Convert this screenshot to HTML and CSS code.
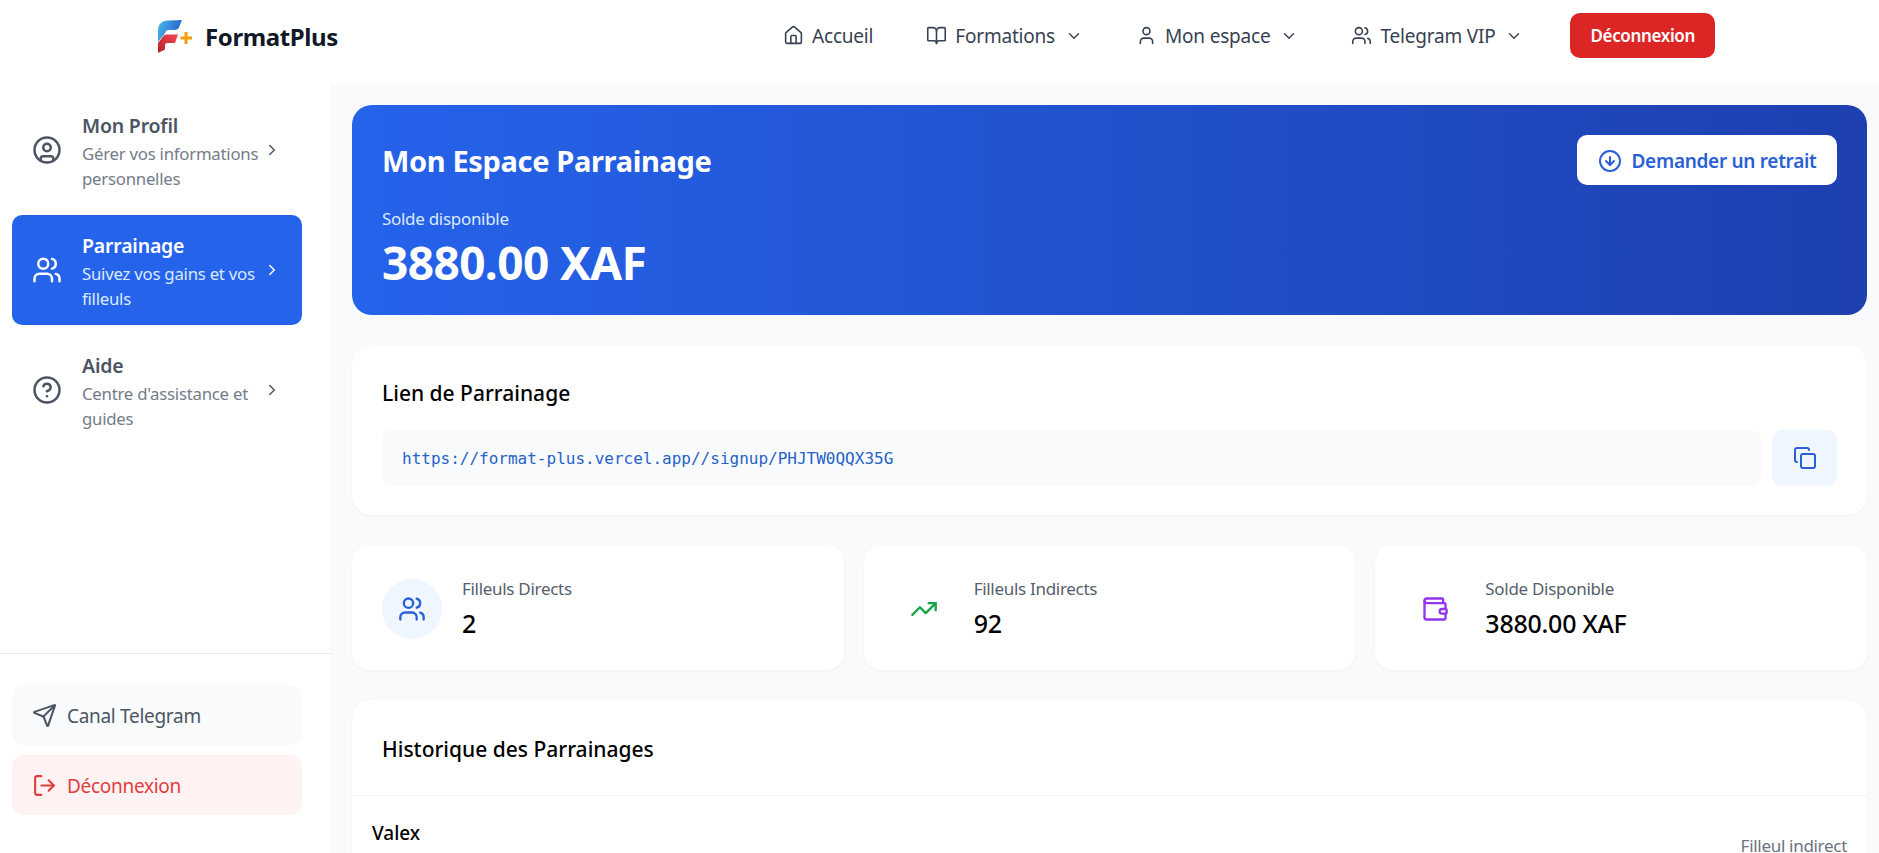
FILE: index.html
```html
<!DOCTYPE html>
<html lang="fr">
<head>
<meta charset="utf-8">
<title>FormatPlus</title>
<link rel="stylesheet" href="styles.css">
</head>
<body>
<svg class="defs" width="0" height="0" aria-hidden="true">
  <defs>
    <linearGradient id="lgTop" x1="0" y1="0.2" x2="1" y2="0.5"><stop offset="0" stop-color="#45b4ea"/><stop offset="1" stop-color="#2560c4"/></linearGradient>
    <linearGradient id="lgBot" x1="0" y1="1" x2="1" y2="0.2"><stop offset="0" stop-color="#b91f2d"/><stop offset="1" stop-color="#f0454d"/></linearGradient>
    <symbol id="i-chev-r" viewBox="0 0 24 24"><path d="m9 18 6-6-6-6"/></symbol>
    <symbol id="i-chev-d" viewBox="0 0 24 24"><path d="m6 9 6 6 6-6"/></symbol>
    <symbol id="i-users" viewBox="0 0 24 24"><path d="M16 21v-2a4 4 0 0 0-4-4H6a4 4 0 0 0-4 4v2"/><path d="M16 3.130a4 4 0 0 1 0 7.750"/><path d="M22 21v-2a4 4 0 0 0-3-3.870"/><circle cx="9" cy="7" r="4"/></symbol>
  </defs>
</svg>
<header class="topbar">
  <div class="brand">
    <svg class="logo" viewBox="158 18 35 35">
      <path d="M158 30C158 23 162 19.500 168 19.500L182 19 178.500 27.500C177 28.500 175 29 173 29H169C166.500 29 165.500 30.500 164.500 33L158 41Z" fill="url(#lgTop)"/>
      <path d="M158 42 163.500 35C164.500 33.800 165.500 33.500 167 33.500H178L175 42H167.500C166 42 165 43 165 44.500V48.500L158 52Z" fill="url(#lgBot)"/>
      <path d="M186 31V43M180.500 37H192" stroke="#f59e0b" stroke-width="3" fill="none"/>
    </svg>
    <span class="brand-name">FormatPlus</span>
  </div>
  <nav class="topnav">
    <a class="navlink"><svg class="ic ic-nav" viewBox="0 0 24 24"><path d="M15 21v-8a1 1 0 0 0-1-1h-4a1 1 0 0 0-1 1v8"/><path d="M3 10a2 2 0 0 1 .709-1.528l7-5.999a2 2 0 0 1 2.582 0l7 5.999A2 2 0 0 1 21 10v9a2 2 0 0 1-2 2H5a2 2 0 0 1-2-2z"/></svg>Accueil</a>
    <a class="navlink"><svg class="ic ic-nav" viewBox="0 0 24 24"><path d="M12 7v14"/><path d="M3 18a1 1 0 0 1-1-1V4a1 1 0 0 1 1-1h5a4 4 0 0 1 4 4 4 4 0 0 1 4-4h5a1 1 0 0 1 1 1v13a1 1 0 0 1-1 1h-6a3 3 0 0 0-3 3 3 3 0 0 0-3-3z"/></svg>Formations<svg class="ic ic-caret"><use href="#i-chev-d"/></svg></a>
    <a class="navlink"><svg class="ic ic-nav" viewBox="0 0 24 24"><path d="M19 21v-2a4 4 0 0 0-4-4H9a4 4 0 0 0-4 4v2"/><circle cx="12" cy="7" r="4"/></svg>Mon espace<svg class="ic ic-caret"><use href="#i-chev-d"/></svg></a>
    <a class="navlink navlink-last"><svg class="ic ic-nav"><use href="#i-users"/></svg>Telegram VIP<svg class="ic ic-caret"><use href="#i-chev-d"/></svg></a>
    <a class="logout-btn">Déconnexion</a>
  </nav>
</header>
<div class="shell">
  <aside class="sidebar">
    <div class="side-nav">
      <a class="side-item">
        <svg class="ic ic-side" viewBox="0 0 24 24"><circle cx="12" cy="12" r="10"/><circle cx="12" cy="10" r="3"/><path d="M7 20.662V19a2 2 0 0 1 2-2h6a2 2 0 0 1 2 2v1.662"/></svg>
        <span class="side-text"><span class="side-title">Mon Profil</span><span class="side-desc">Gérer vos informations personnelles</span></span>
        <svg class="ic ic-chev"><use href="#i-chev-r"/></svg>
      </a>
      <a class="side-item is-active">
        <svg class="ic ic-side"><use href="#i-users"/></svg>
        <span class="side-text"><span class="side-title">Parrainage</span><span class="side-desc">Suivez vos gains et vos filleuls</span></span>
        <svg class="ic ic-chev"><use href="#i-chev-r"/></svg>
      </a>
      <a class="side-item">
        <svg class="ic ic-side" viewBox="0 0 24 24"><circle cx="12" cy="12" r="10"/><path d="M9.090 9a3 3 0 0 1 5.830 1c0 2-3 3-3 3"/><path d="M12 17h.01"/></svg>
        <span class="side-text"><span class="side-title">Aide</span><span class="side-desc">Centre d'assistance et guides</span></span>
        <svg class="ic ic-chev"><use href="#i-chev-r"/></svg>
      </a>
    </div>
    <div class="side-foot">
      <a class="foot-btn foot-tg"><svg class="ic ic-foot" viewBox="0 0 24 24"><path d="M14.536 21.686a.5.5 0 0 0 .937-.024l6.500-19a.496.496 0 0 0-.635-.635l-19 6.500a.5.5 0 0 0-.024.937l7.930 3.180a2 2 0 0 1 1.112 1.110z"/><path d="m21.854 2.147-10.940 10.939"/></svg>Canal Telegram</a>
      <a class="foot-btn foot-out"><svg class="ic ic-foot" viewBox="0 0 24 24"><path d="M9 21H5a2 2 0 0 1-2-2V5a2 2 0 0 1 2-2h4"/><path d="m16 17 5-5-5-5"/><path d="M21 12H9"/></svg>Déconnexion</a>
    </div>
  </aside>
  <main class="content">
    <section class="hero">
      <div class="hero-left">
        <h1 class="hero-title">Mon Espace Parrainage</h1>
        <div class="hero-label">Solde disponible</div>
        <div class="hero-amount">3880.00 XAF</div>
      </div>
      <a class="withdraw"><svg class="ic ic-withdraw" viewBox="0 0 24 24"><circle cx="12" cy="12" r="10"/><path d="M12 8v8"/><path d="m8 12 4 4 4-4"/></svg>Demander un retrait</a>
    </section>
    <section class="card link-card">
      <h2 class="card-title">Lien de Parrainage</h2>
      <div class="link-row">
        <div class="link-box">https://format-plus.vercel.app//signup/PHJTW0QQX35G</div>
        <a class="copy-btn"><svg class="ic ic-copy" viewBox="0 0 24 24"><rect width="14" height="14" x="8" y="8" rx="2" ry="2"/><path d="M4 16c-1.100 0-2-.9-2-2V4c0-1.100.9-2 2-2h10c1.100 0 2 .9 2 2"/></svg></a>
      </div>
    </section>
    <section class="stats">
      <div class="stat">
        <span class="stat-icon tint-blue"><svg class="ic ic-stat"><use href="#i-users"/></svg></span>
        <div><div class="stat-label">Filleuls Directs</div><div class="stat-value">2</div></div>
      </div>
      <div class="stat">
        <span class="stat-icon tint-green"><svg class="ic ic-stat" viewBox="0 0 24 24"><path d="M16 7h6v6"/><path d="m22 7-8.500 8.500-5-5L2 17"/></svg></span>
        <div><div class="stat-label">Filleuls Indirects</div><div class="stat-value">92</div></div>
      </div>
      <div class="stat">
        <span class="stat-icon tint-purple"><svg class="ic ic-stat" viewBox="0 0 24 24"><path d="M19 7V4a1 1 0 0 0-1-1H5a2 2 0 0 0 0 4h15a1 1 0 0 1 1 1v4h-3a2 2 0 0 0 0 4h3a1 1 0 0 0 1-1v-2a1 1 0 0 0-1-1"/><path d="M3 5v14a2 2 0 0 0 2 2h15a1 1 0 0 0 1-1v-4"/></svg></span>
        <div><div class="stat-label">Solde Disponible</div><div class="stat-value">3880.00 XAF</div></div>
      </div>
    </section>
    <section class="card history">
      <h2 class="card-title history-head">Historique des Parrainages</h2>
      <div class="history-row">
        <div class="row-name">Valex</div>
        <div class="row-kind">Filleul indirect</div>
      </div>
    </section>
  </main>
</div>
</body>
</html>
```
FILE: styles.css
```css
* { box-sizing: border-box; }
html, body { height: 100%; }
body {
  margin: 0;
  height: 853px;
  overflow: hidden;
  display: flex;
  flex-direction: column;
  background: #fff;
  font-family: "Noto Sans", "Open Sans", sans-serif;
  color: #000;
}
.defs { display: block; height: 0; }
.ic { fill: none; stroke: currentColor; stroke-width: 2; stroke-linecap: round; stroke-linejoin: round; flex: none; }

.topbar {
  height: 85px;
  flex: none;
  display: flex;
  align-items: flex-start;
  justify-content: space-between;
  padding: 13px 164px 0 158px;
  background: #fff;
}
.brand { display: flex; align-items: center; gap: 12px; height: 46px; }
.logo { width: 35px; height: 35px; }
.brand-name { font-size: 24px; font-weight: 700; letter-spacing: -0.4px; color: #111827; }

.topnav { display: flex; align-items: center; height: 45px; }
.navlink {
  display: flex;
  align-items: center;
  font-size: 19px;
  letter-spacing: -0.2px;
  color: #374151;
  margin-right: 53px;
  white-space: nowrap;
}
.navlink-last { margin-right: 47px; }
.ic-nav { width: 21px; height: 21px; margin-right: 8px; stroke-width: 1.8; }
.ic-caret { width: 18px; height: 18px; margin-left: 10px; stroke-width: 1.8; }
.logout-btn {
  height: 45px;
  padding: 0 20px;
  display: flex;
  align-items: center;
  background: #dc2626;
  color: #fff;
  border-radius: 10px;
  font-size: 17px;
  font-weight: 600;
  letter-spacing: -0.35px;
}

.shell { flex: 1; display: flex; min-height: 0; }
.sidebar {
  width: 332px;
  flex: none;
  display: flex;
  flex-direction: column;
  justify-content: space-between;
  background: #fff;
  border-right: 1px solid #f3f4f6;
}
.side-nav { display: flex; flex-direction: column; gap: 10px; padding: 10px 29px 0 12px; }
.side-item {
  height: 110px;
  display: flex;
  align-items: center;
  padding: 0 0 0 20px;
  border-radius: 10px;
  color: #4b5563;
}
.ic-side { width: 30px; height: 30px; margin-right: 20px; }
.side-text { flex: none; width: 181px; display: flex; flex-direction: column; padding-top: 3px; }
.side-title { font-size: 19.500px; font-weight: 600; line-height: 28px; letter-spacing: -0.2px; color: #4b5563; margin-bottom: 1px; }
.side-desc { font-size: 16.800px; line-height: 25px; letter-spacing: -0.25px; color: #757c89; }
.ic-chev { width: 18px; height: 18px; }
.is-active { background: #2563eb; color: #fff; }
.is-active .side-title { color: #fff; }
.is-active .side-desc { color: #dbeafe; }

.side-foot {
  display: flex;
  flex-direction: column;
  gap: 10px;
  padding: 31px 29px 38px 12px;
  border-top: 1px solid #e5e7eb;
}
.foot-btn {
  height: 60px;
  display: flex;
  align-items: center;
  padding: 1px 0 0 20px;
  border-radius: 12px;
  font-size: 19px;
  letter-spacing: -0.3px;
}
.ic-foot { width: 25px; height: 25px; margin-right: 10px; }
.foot-tg { background: #f9fafb; color: #4b5563; }
.foot-out { background: #fef2f2; color: #e03e3e; }

.content {
  flex: 1;
  min-width: 0;
  background: #f9fafb;
  padding: 20px 12px 0 20px;
  display: flex;
  flex-direction: column;
  gap: 30px;
  overflow: hidden;
}
.hero {
  flex: none;
  height: 210px;
  display: flex;
  justify-content: space-between;
  align-items: flex-start;
  padding: 30px;
  border-radius: 20px;
  background: linear-gradient(90deg, #2563eb, #1e40af);
  color: #fff;
}
.hero-title { margin: 0; font-size: 29px; line-height: 52px; font-weight: 700; letter-spacing: -0.35px; }
.hero-label { font-size: 17px; line-height: 24px; margin-top: 20px; letter-spacing: -0.3px; color: #dbeafe; }
.hero-amount { font-size: 46px; line-height: 52px; font-weight: 700; letter-spacing: -0.6px; margin-top: 5px; }
.withdraw {
  height: 50px;
  width: 260px;
  display: flex;
  align-items: center;
  justify-content: center;
  gap: 10px;
  padding-top: 1px;
  background: #fff;
  border-radius: 10px;
  color: #2a5fd6;
  font-size: 19px;
  font-weight: 600;
  letter-spacing: -0.3px;
}
.ic-withdraw { width: 24px; height: 24px; }

.card {
  flex: none;
  background: #fff;
  border-radius: 20px;
  box-shadow: 0 1px 3px rgba(0, 0, 0, 0.04);
}
.card-title { margin: 0; font-size: 21px; font-weight: 500; letter-spacing: 0; line-height: 30px; color: #000; }
.link-card { height: 170px; padding: 33px 30px 0; }
.link-row { display: flex; gap: 11px; margin-top: 22px; }
.link-box {
  flex: 1;
  height: 56px;
  display: flex;
  align-items: center;
  padding-left: 20px;
  background: #f9fafb;
  border-radius: 10px;
  font-family: "DejaVu Sans Mono", monospace;
  font-size: 16px;
  color: #2463c8;
}
.copy-btn {
  width: 65px;
  height: 56px;
  display: flex;
  align-items: center;
  justify-content: center;
  background: #eff6ff;
  border-radius: 10px;
  color: #2a5fd6;
}
.ic-copy { width: 24px; height: 24px; }

.stats { flex: none; display: grid; grid-template-columns: repeat(3, 1fr); gap: 20px; }
.stat {
  height: 125px;
  display: flex;
  align-items: center;
  gap: 20px;
  padding: 2px 30px 0;
  background: #fff;
  border-radius: 18px;
  box-shadow: 0 1px 3px rgba(0, 0, 0, 0.04);
}
.stat-icon { width: 60px; height: 60px; border-radius: 50%; display: flex; align-items: center; justify-content: center; flex: none; }
.ic-stat { width: 28px; height: 28px; }
.tint-blue { background: #eff6ff; color: #2a5fd6; }
.tint-green { color: #16a34a; }
.tint-purple { color: #9333ea; }
.stat-label { font-size: 17px; line-height: 24px; letter-spacing: -0.3px; color: #565e6c; }
.stat-value { font-size: 25px; line-height: 34px; font-weight: 500; letter-spacing: -0.25px; margin-top: 5px; }

.history { flex: none; height: 260px; }
.history-head { height: 96px; padding: 34px 30px 0; border-bottom: 1px solid #f3f4f6; }
.history-row { display: flex; justify-content: space-between; align-items: flex-start; padding: 22px 20px 0; }
.row-name { font-size: 19px; font-weight: 500; line-height: 30px; }
.row-kind { font-size: 17px; line-height: 16px; margin-top: 20px; letter-spacing: -0.3px; color: #6b7280; }
```
